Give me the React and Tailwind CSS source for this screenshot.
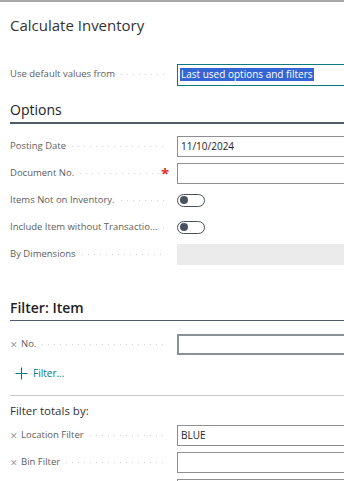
import React from 'react';

const font = { fontFamily: '"Open Sans", "Noto Sans", sans-serif' };

const Leader = () => (
    <span className="flex-1 h-px ml-[6px] mr-[2px] bg-[linear-gradient(to_right,#cfcfcf_1px,transparent_1px)] bg-[length:6px_1px] bg-repeat-x" />
);

const Field = ({ label, x, required, children }) => (
    <div className="flex items-center h-[27px]">
        <div className="w-[157px] flex items-center shrink-0">
            {x && <span className="text-[9px] text-[#9a9a9a] mr-[3px] leading-none">✕</span>}
            <span className="text-[9.5px] text-[#605e5c] whitespace-nowrap">{label}</span>
            <Leader />
            {required && <span className="text-[#e0301e] text-[15px] leading-none font-bold w-[8px] -mr-[2px]">*</span>}
        </div>
        <div className="ml-[10px] flex-1 min-w-0">{children}</div>
    </div>
);

const Input = ({ value, dark }) => (
    <div className={`h-[21px] border ${dark ? 'border-[#8a8f98] border-2' : 'border-[#8f8f8f]'} bg-white flex items-center px-[3px] text-[10px] text-[#222] w-[190px]`}>
        {value}
    </div>
);

const Toggle = () => (
    <div className="w-[28px] h-[13px] rounded-full border border-[#4a5160] flex items-center px-[2px]">
        <span className="w-[8px] h-[8px] rounded-full bg-[#4a5160]" />
    </div>
);

export default function App() {
    return (
        <div style={font} className="w-[344px] h-[481px] overflow-hidden bg-white border-t-2 border-[#a8a8a8]">
            <div className="pl-[10px]">
                <h1 className="text-[15px] text-[#333] pt-[13px] leading-[20px]">Calculate Inventory</h1>

                <div className="mt-[26px]">
                    <Field label="Use default values from">
                        <div className="h-[22px] border border-[#0b7a7e] bg-white flex items-center px-[2px] w-[190px]">
                            <span className="bg-[#3465d4] text-white text-[10px] leading-[13px] px-[1px] whitespace-nowrap">Last used options and filters</span>
                        </div>
                    </Field>
                </div>

                <h2 className="text-[14px] text-[#222] mt-[12px] leading-[20px]">Options</h2>
                <div className="h-[1.5px] bg-[#505a6b] mt-[2px]" />

                <div className="mt-[9px]">
                    <Field label="Posting Date"><Input value="11/10/2024" /></Field>
                    <Field label="Document No." required><Input value="" /></Field>
                    <Field label="Items Not on Inventory."><Toggle /></Field>
                    <Field label="Include Item without Transactio..."><Toggle /></Field>
                    <Field label="By Dimensions">
                        <div className="h-[21px] bg-[#ebebeb] w-[190px]" />
                    </Field>
                </div>

                <h2 className="text-[14px] text-[#222] font-semibold mt-[30px] leading-[20px]">Filter: Item</h2>
                <div className="h-[1.5px] bg-[#505a6b] mt-[2px]" />

                <div className="mt-[10px]">
                    <Field label="No." x><Input value="" dark /></Field>
                </div>

                <button className="flex items-center gap-[5px] text-[#007c85] text-[10px] mt-[8px] ml-[5px]">
                    <svg width="13" height="13" viewBox="0 0 13 13"><path d="M6.5 0.5v12M0.5 6.5h12" stroke="#007c85" strokeWidth="1.2" /></svg>
                    <span>Filter...</span>
                </button>

                <div className="h-px bg-[#c8c8c8] mt-[14px]" />
                <div className="text-[11.5px] text-[#333] mt-[7px] leading-[16px]">Filter totals by:</div>

                <div className="mt-[3px]">
                    <Field label="Location Filter" x><Input value="BLUE" /></Field>
                    <Field label="Bin Filter" x><Input value="" /></Field>
                    <Field label=""><Input value="" /></Field>
                </div>
            </div>
        </div>
    );
}
